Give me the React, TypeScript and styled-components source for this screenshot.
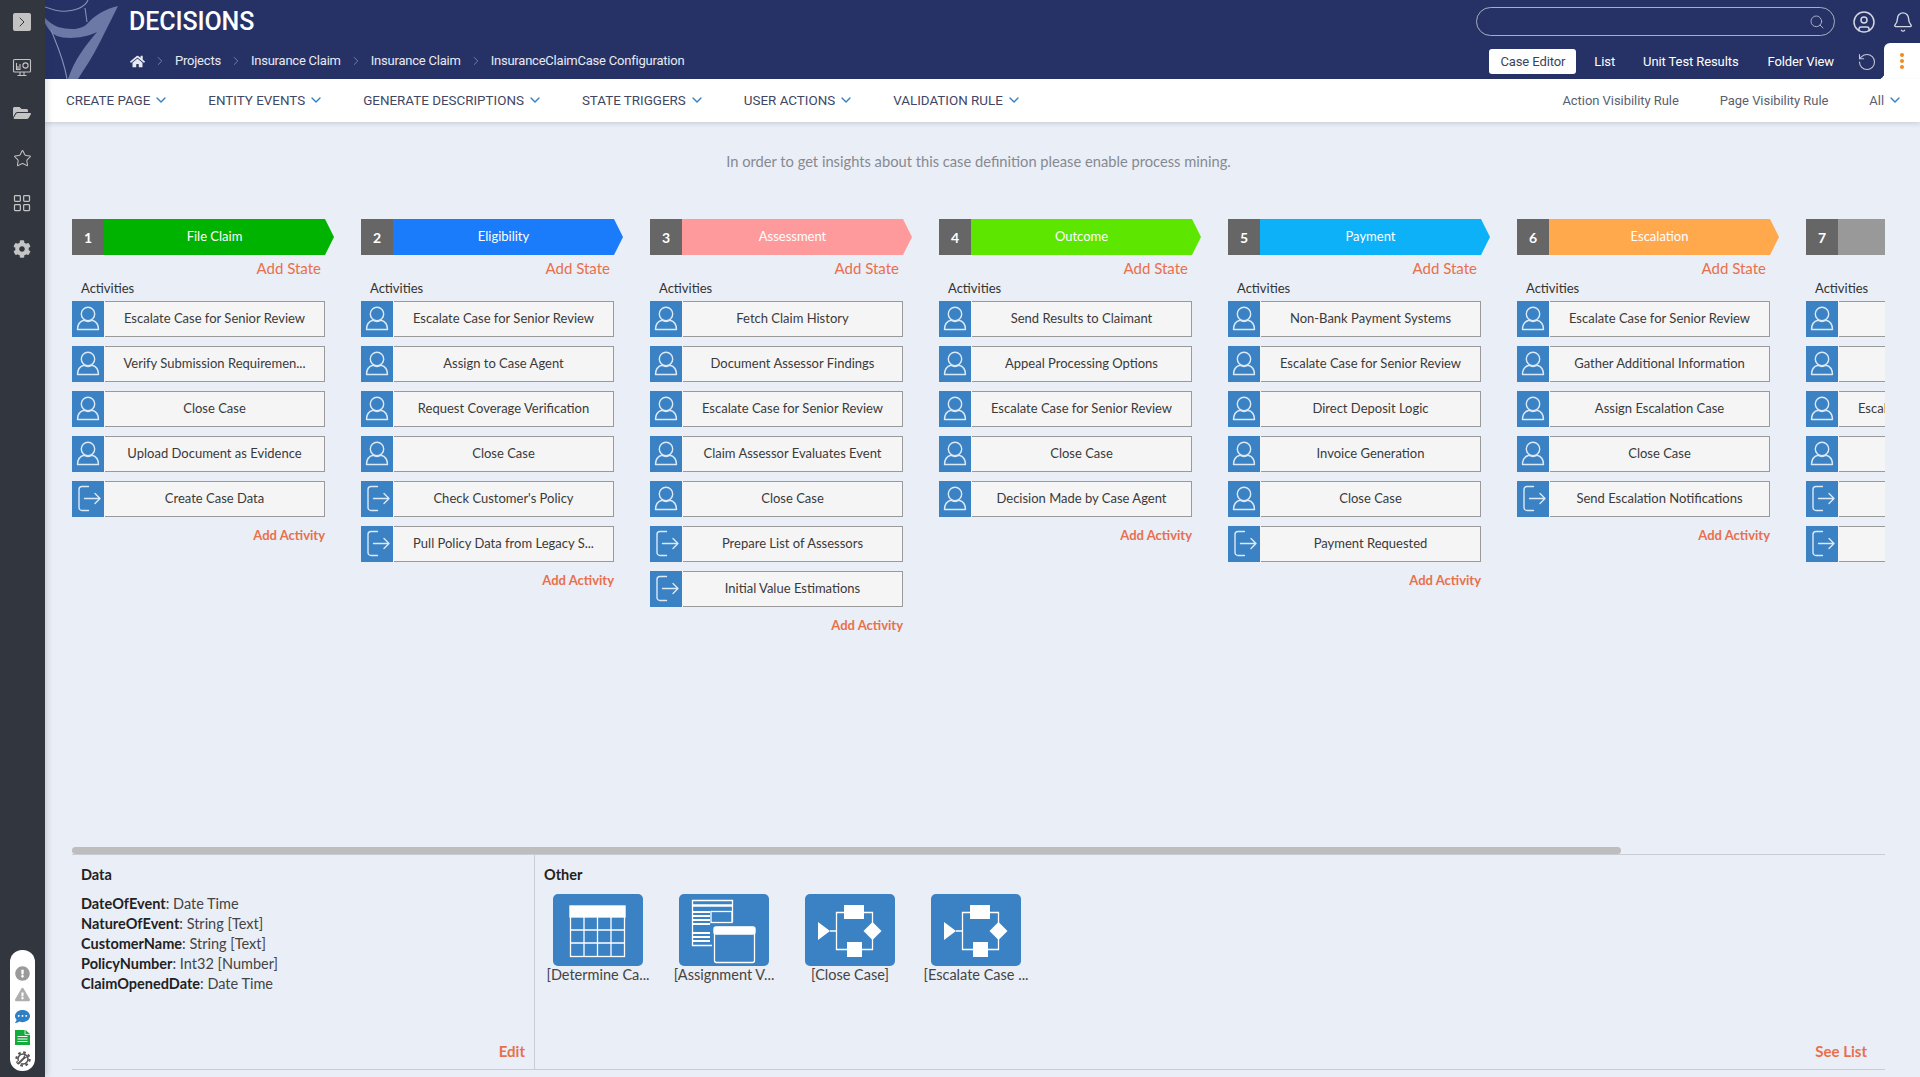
import React from "react";
import styled, { createGlobalStyle } from "styled-components";
import { Bell, ChevronDown, ChevronRight, CircleUser, LayoutGrid, RotateCcw, Search, Star } from "lucide-react";
import { FaCog, FaCommentDots, FaExclamationCircle, FaExclamationTriangle, FaFolderOpen, FaHome } from "react-icons/fa";

const Global = createGlobalStyle`
  html, body { margin: 0; padding: 0; height: 100%; overflow: hidden; background: #eaeef6; }
  * { box-sizing: border-box; }
  #root { height: 100%; }
`;

const Shell = styled.div`
  display: flex;
  width: 1920px;
  height: 1077px;
  overflow: hidden;
  font-family: "Lato", "Open Sans", sans-serif;
  color: #333;
`;

const Rail = styled.nav`
  flex: 0 0 45px;
  background: #31363f;
  display: flex;
  flex-direction: column;
  align-items: center;
  padding: 13px 1px 6px 0;
  color: #c4c4c4;
  box-shadow: 2px 0 6px rgba(40, 50, 70, 0.18);
  z-index: 3;
`;

const RailToggle = styled.button`
  width: 18px;
  height: 18px;
  border: 0;
  padding: 0;
  border-radius: 2px;
  background: #c2c2c2;
  color: #31363f;
  display: flex;
  align-items: center;
  justify-content: center;
  margin-bottom: 28px;
`;

const RailItem = styled.div`
  height: 18px;
  display: flex;
  align-items: center;
  justify-content: center;
  margin-bottom: 27px;
`;

const LastRailItem = styled(RailItem)`
  margin-top: 1px;
`;

const StatusPill = styled.div`
  margin-top: auto;
  margin-left: 1px;
  width: 25px;
  height: 121px;
  border-radius: 12px;
  background: #fff;
  display: flex;
  flex-direction: column;
  align-items: center;
  justify-content: flex-end;
  gap: 6px;
  padding-bottom: 4px;
`;

const PillIcon = styled.span<{ $c: string }>`
  display: flex;
  height: 15.5px;
  align-items: center;
  color: ${(p) => p.$c};
`;

const Main = styled.div`
  flex: 1;
  min-width: 0;
  display: flex;
  flex-direction: column;
`;

const Header = styled.header`
  position: relative;
  height: 79px;
  flex: none;
  background: #263266;
  color: #fff;
  font-family: "Roboto", sans-serif;
  display: flex;
  justify-content: space-between;
`;

const Logo = styled.svg`
  position: absolute;
  left: 0;
  top: 0;
`;

const Brand = styled.div`
  padding: 8px 0 0 84px;
  display: flex;
  flex-direction: column;
`;

const Title = styled.div`
  font-size: 25px;
  font-weight: 500;
  line-height: 28px;
  letter-spacing: -0.1px;
`;

const Crumbs = styled.div`
  display: flex;
  align-items: center;
  margin-top: 16px;
  margin-left: 1px;
  font-size: 13px;
  line-height: 18px;
  letter-spacing: -0.22px;
  color: #e8eaf2;
`;

const CrumbSep = styled(ChevronRight)`
  margin: 0 8px;
  color: #aab0c8;
`;

const HeaderRight = styled.div`
  display: flex;
  flex-direction: column;
  align-items: flex-end;
`;

const TopRow = styled.div`
  display: flex;
  align-items: center;
  height: 43px;
  padding: 0 6px 0 0;
`;

const SearchBox = styled.div`
  width: 359px;
  height: 29px;
  border: 1px solid #a9aec4;
  border-radius: 15px;
  display: flex;
  align-items: center;
  justify-content: flex-end;
  padding-right: 9px;
  color: #a9aec4;
  margin: 0 17px 0 0;
`;

const TopIcon = styled.span`
  display: flex;
  color: #d4d7e2;
  margin-left: 0;
`;

const BellIcon = styled(TopIcon)`
  margin-left: 16px;
`;

const ViewRow = styled.div`
  display: flex;
  align-items: center;
  height: 36px;
`;

const ViewTab = styled.div<{ $active?: boolean }>`
  height: 25px;
  margin: 1px 0 0 ${(p) => (p.$active ? 0 : 29)}px;
  display: flex;
  align-items: center;
  padding: ${(p) => (p.$active ? "0 11px" : "0")};
  border-radius: 3px;
  font-size: 13px;
  letter-spacing: -0.1px;
  background: ${(p) => (p.$active ? "#fff" : "transparent")};
  color: ${(p) => (p.$active ? "#3b4260" : "#fff")};
`;

const ListTab = styled(ViewTab)`
  margin-left: 18px;
  margin-right: -1px;
`;

const RefreshIcon = styled.span`
  display: flex;
  margin: 1px 0 0 23px;
  color: #c4c8d6;
`;

const KebabTab = styled.div`
  margin-left: 7px;
  width: 36px;
  height: 36px;
  background: #fff;
  border-top-left-radius: 6px;
  display: flex;
  flex-direction: column;
  align-items: center;
  justify-content: center;
  gap: 2px;
  position: relative;
  &::before {
    content: "";
    position: absolute;
    left: -6px;
    bottom: 0;
    width: 6px;
    height: 6px;
    background: radial-gradient(circle at 0 0, #263266 6px, #fff 6.5px);
  }
`;

const Dot = styled.span`
  width: 4px;
  height: 4px;
  border-radius: 50%;
  background: #f08c1e;
`;

const Toolbar = styled.div`
  height: 43px;
  flex: none;
  background: #fff;
  display: flex;
  align-items: center;
  padding: 0 0 1px 21px;
  font-family: "Roboto", sans-serif;
  font-size: 13.4px;
  color: #3f4663;
  box-shadow: 0 2px 4px rgba(40, 50, 80, 0.15);
  z-index: 2;
`;

const Menu = styled.div`
  display: flex;
  align-items: center;
  gap: 3px;
  margin-right: 39px;
`;

const Chevron = styled(ChevronDown)`
  color: #2f7fc4;
`;

const ToolbarRight = styled.div`
  margin-left: auto;
  display: flex;
  align-items: center;
  padding-right: 17px;
  font-size: 13px;
  letter-spacing: -0.05px;
  color: #5a5f70;
`;

const RuleLink = styled.div`
  margin-right: 41px;
`;

const AllMenu = styled(Menu)`
  margin-right: 0;
`;

const Body = styled.div`
  flex: 1;
  min-height: 0;
  display: flex;
  flex-direction: column;
  padding: 0 35px 7px 27px;
`;

const Insight = styled.div`
  height: 97px;
  flex: none;
  padding-top: 30px;
  text-align: center;
  font-size: 14.7px;
  line-height: 18px;
  color: #858a92;
`;

const Board = styled.div`
  flex: 1;
  min-height: 0;
  display: flex;
  gap: 27px;
  overflow: hidden;
`;

const Column = styled.section`
  flex: 0 0 262px;
  display: flex;
  flex-direction: column;
`;

const StageHead = styled.div`
  display: flex;
  height: 36px;
`;

const StageNo = styled.div`
  flex: 0 0 32px;
  background: #666;
  color: #fff;
  font-weight: 700;
  font-size: 14px;
  display: flex;
  align-items: center;
  justify-content: center;
`;

const StageName = styled.div<{ $c: string }>`
  flex: 1;
  background: ${(p) => p.$c};
  color: #fff;
  font-size: 13px;
  display: flex;
  align-items: center;
  justify-content: center;
  padding: 0 9px 2px 0;
  clip-path: polygon(0 0, calc(100% - 9px) 0, 100% 50%, calc(100% - 9px) 100%, 0 100%);
`;

const AddState = styled.div`
  height: 26px;
  width: 249px;
  text-align: right;
  font-size: 15px;
  line-height: 26px;
  color: #e8704c;
`;

const ActivitiesLabel = styled.div`
  height: 20px;
  padding-left: 9px;
  font-size: 13px;
  line-height: 14px;
  color: #333;
`;

const Rows = styled.div`
  display: flex;
  flex-direction: column;
  gap: 9px;
  width: 253px;
`;

const ActivityRow = styled.div`
  display: flex;
  height: 36px;
  border: 1px solid #9a9a9a;
  background: #f5f5f5;
`;

const IconCell = styled.div`
  flex: 0 0 33px;
  margin: -1px 0 -1px -1px;
  background: #3b82c4;
  display: flex;
  align-items: center;
  justify-content: center;
  border-right: 1px solid #f5f5f5;
`;

const ActivityText = styled.div`
  flex: 1;
  min-width: 0;
  display: flex;
  align-items: center;
  justify-content: center;
  white-space: nowrap;
  font-size: 13px;
  padding-bottom: 2px;
  color: #3a3a3a;
`;

const AddActivity = styled.div`
  width: 253px;
  text-align: right;
  font-size: 13px;
  font-weight: 700;
  line-height: 16px;
  margin-top: 10px;
  color: #e8704c;
`;

const ScrollTrack = styled.div`
  flex: none;
  height: 8px;
  border-bottom: 1px solid #c8ccd4;
`;

const ScrollThumb = styled.div`
  width: 1549px;
  height: 7px;
  border-radius: 4px;
  background: #bdbdbd;
`;

const Footer = styled.div`
  flex: none;
  height: 215px;
  display: flex;
  border-bottom: 1px solid #c8ccd4;
`;

const DataPane = styled.div`
  flex: 0 0 463px;
  border-right: 1px solid #c8ccd4;
  padding: 11px 9px 0;
  display: flex;
  flex-direction: column;
`;

const PaneTitle = styled.div`
  font-size: 14.5px;
  font-weight: 700;
  line-height: 17px;
  color: #222;
`;

const DataList = styled.div`
  margin-top: 11px;
  font-size: 14.5px;
  line-height: 20px;
  color: #444;
`;

const DataName = styled.b`
  color: #222;
  font-weight: 700;
`;

const LinkText = styled.div`
  margin-top: auto;
  text-align: right;
  font-size: 15px;
  font-weight: 700;
  line-height: 18px;
  padding-bottom: 9px;
  color: #e8704c;
`;

const OtherPane = styled.div`
  flex: 1;
  padding: 11px 18px 0 9px;
  display: flex;
  flex-direction: column;
`;

const Tiles = styled.div`
  display: flex;
  margin-top: 11px;
  margin-left: -9px;
`;

const Tile = styled.div`
  flex: 0 0 126px;
  display: flex;
  flex-direction: column;
  align-items: center;
  font-size: 14.5px;
  line-height: 18px;
  color: #444;
  white-space: nowrap;
`;

const TileArt = styled.svg`
  display: block;
  border-radius: 5px;
  background: #3b82c4;
`;

const Person = () => (
  <svg width="32" height="36" viewBox="0 0 32 36" fill="none" stroke="#dce9f6" strokeWidth="1.4">
    <circle cx="16" cy="13" r="6.7" />
    <path d="M5.500 28.500c0-5.500 3.400-8.500 6.500-9.300 2.400 1.600 5.600 1.600 8 0 3.100.8 6.500 3.800 6.500 9.300z" strokeLinejoin="round" />
  </svg>
);

const Exit = () => (
  <svg width="32" height="36" viewBox="0 0 32 36" fill="none" stroke="#dce9f6" strokeWidth="1.4" strokeLinecap="round" strokeLinejoin="round">
    <path d="M16.500 5.500H10a3 3 0 0 0-3 3v18a3 3 0 0 0 3 3h6.500" />
    <path d="M12.500 17.500H28M23 12.500l5 5-5 5" />
  </svg>
);

const TableArt = () => (
  <TileArt width="90" height="72" viewBox="0 0 90 72" fill="none" stroke="#fff" strokeWidth="1.300">
    <rect x="17.500" y="12.500" width="54" height="50" />
    <rect x="17" y="12" width="55" height="11" fill="#fff" />
    <path d="M31 23v40M44.500 23v40M58 23v40M17 36h55M17 49h55" />
  </TileArt>
);

const FormArt = () => (
  <TileArt width="90" height="72" viewBox="0 0 90 72" fill="none" stroke="#fff" strokeWidth="1.300">
    <path d="M33 51.500H13.500V6.500H53.500V28" />
    <path d="M13 11.500h41" strokeWidth="2.500" />
    <path d="M14 18h17M14 22h17M14 26h17M14 30h17M14 39h17M14 43h17M14 47h17" strokeWidth="1.800" />
    <rect x="32" y="17.500" width="21" height="11" />
    <rect x="35.500" y="33.500" width="40" height="35" rx="2" />
    <rect x="35" y="33" width="41" height="7" rx="2" fill="#fff" />
  </TileArt>
);

const FlowArt = () => (
  <TileArt width="90" height="72" viewBox="0 0 90 72" fill="none" stroke="#fff" strokeWidth="1.300">
    <path d="M13 28l12 9-12 9z" fill="#fff" stroke="none" />
    <path d="M25 37h6.500M31.500 18.500H67.500V55.500H31.500z" />
    <rect x="39" y="11" width="20" height="14" fill="#fff" stroke="none" />
    <rect x="42" y="48" width="15" height="15" fill="#fff" stroke="none" />
    <path d="M67.500 28l9 9-9 9-9-9z" fill="#fff" stroke="none" />
  </TileArt>
);

const Monitor = () => (
  <svg width="20" height="20" viewBox="0 0 20 20" fill="none" stroke="#c4c4c4" strokeWidth="1.100">
    <rect x="1.500" y="1.500" width="17" height="12.500" rx="1" />
    <path d="M4.500 5v6.500h4M6 11V8M8 11V6" />
    <circle cx="13.500" cy="7.500" r="2.600" />
    <path d="M8 14v3M12 14v3M5.500 17.500h9" />
  </svg>
);

const SheetIcon = () => (
  <svg width="15" height="15" viewBox="0 0 15 15">
    <path d="M0 0h10.500L15 4v11H0z" fill="#12ab3c" />
    <path d="M10 0v4.500h5" fill="none" stroke="#fff" strokeWidth="0.800" />
    <path d="M2.500 6.500h10M2.500 9h10M2.500 11.500h10" stroke="#fff" strokeWidth="1" />
  </svg>
);

const ToolGear = () => (
  <svg width="16" height="16" viewBox="0 0 16 16" fill="none" stroke="#555">
    <circle cx="8" cy="8" r="5" strokeWidth="1.500" />
    <circle cx="8" cy="8" r="6.600" strokeWidth="2.200" strokeDasharray="2.600 2.580" />
    <path d="M3.500 12.500L10.500 5.500" stroke="#fff" strokeWidth="3.500" />
    <path d="M3.500 12.500L9.500 6.500" strokeWidth="1.800" strokeLinecap="round" />
    <path d="M8.800 7.200a2.300 2.300 0 0 1 2.200-3.400L9.800 5.300l.9.900 1.500-1.200a2.300 2.300 0 0 1-3.400 2.200z" fill="#555" stroke="none" />
  </svg>
);

const LogoArt = () => (
  <Logo width="80" height="79" viewBox="0 0 80 79" fill="none">
    <path d="M73 6C60 9 50 15 42 24 36 30 25 30 13 27 8 25 3 21 0 18v5c3 6 7 11 12 13 8 3 26 3 40-4C42 44 30 58 23 79h10C40 68 48 56 54 44 60 32 66 20 73 6z" fill="#6c78a6" />
    <path d="M0 7c8 3 16 5 22 4C32 10 40 7 43 0M40 8l2 14M6 30c6 15 13 30 16 49" stroke="#8791b6" strokeWidth="1.100" />
  </Logo>
);

type Act = [string, "p" | "e"];
const P = (t: string): Act => [t, "p"];
const E = (t: string): Act => [t, "e"];

const stages: { name: string; color: string; rows: Act[]; add: boolean }[] = [
  { name: "File Claim", color: "#00b300", add: true, rows: [P("Escalate Case for Senior Review"), P("Verify Submission Requiremen..."), P("Close Case"), P("Upload Document as Evidence"), E("Create Case Data")] },
  { name: "Eligibility", color: "#1a7cfa", add: true, rows: [P("Escalate Case for Senior Review"), P("Assign to Case Agent"), P("Request Coverage Verification"), P("Close Case"), E("Check Customer's Policy"), E("Pull Policy Data from Legacy S...")] },
  { name: "Assessment", color: "#ff9a9c", add: true, rows: [P("Fetch Claim History"), P("Document Assessor Findings"), P("Escalate Case for Senior Review"), P("Claim Assessor Evaluates Event"), P("Close Case"), E("Prepare List of Assessors"), E("Initial Value Estimations")] },
  { name: "Outcome", color: "#5ce600", add: true, rows: [P("Send Results to Claimant"), P("Appeal Processing Options"), P("Escalate Case for Senior Review"), P("Close Case"), P("Decision Made by Case Agent")] },
  { name: "Payment", color: "#0db1f7", add: true, rows: [P("Non-Bank Payment Systems"), P("Escalate Case for Senior Review"), P("Direct Deposit Logic"), P("Invoice Generation"), P("Close Case"), E("Payment Requested")] },
  { name: "Escalation", color: "#ffa84c", add: true, rows: [P("Escalate Case for Senior Review"), P("Gather Additional Information"), P("Assign Escalation Case"), P("Close Case"), E("Send Escalation Notifications")] },
  { name: "", color: "#999", add: false, rows: [P(""), P(""), P("Escalate Case for Senior Review"), P(""), E(""), E("")] },
];

const menus = ["CREATE PAGE", "ENTITY EVENTS", "GENERATE DESCRIPTIONS", "STATE TRIGGERS", "USER ACTIONS", "VALIDATION RULE"];
const crumbs = ["Projects", "Insurance Claim", "Insurance Claim", "InsuranceClaimCase Configuration"];
const fields = [
  ["DateOfEvent", "Date Time"],
  ["NatureOfEvent", "String [Text]"],
  ["CustomerName", "String [Text]"],
  ["PolicyNumber", "Int32 [Number]"],
  ["ClaimOpenedDate", "Date Time"],
];

export default function App() {
  return (
    <Shell>
      <Global />
      <Rail>
        <RailToggle><ChevronRight size={16} strokeWidth={1.500} /></RailToggle>
        <RailItem><Monitor /></RailItem>
        <RailItem><FaFolderOpen size={18} /></RailItem>
        <RailItem><Star size={19} strokeWidth={1.300} /></RailItem>
        <RailItem><LayoutGrid size={20} strokeWidth={1.500} /></RailItem>
        <LastRailItem><FaCog size={18} /></LastRailItem>
        <StatusPill>
          <PillIcon $c="#9a9a9a"><FaExclamationCircle size={15} /></PillIcon>
          <PillIcon $c="#aeaeae"><FaExclamationTriangle size={15} /></PillIcon>
          <PillIcon $c="#2f7fc4"><FaCommentDots size={15} /></PillIcon>
          <PillIcon $c="#12a83a"><SheetIcon /></PillIcon>
          <PillIcon $c="#555"><ToolGear /></PillIcon>
        </StatusPill>
      </Rail>
      <Main>
        <Header>
          <LogoArt />
          <Brand>
            <Title>DECISIONS</Title>
            <Crumbs>
              <FaHome size={15} />
              {crumbs.map((c, i) => (
                <React.Fragment key={i}>
                  <CrumbSep size={14} strokeWidth={1} />
                  <span>{c}</span>
                </React.Fragment>
              ))}
            </Crumbs>
          </Brand>
          <HeaderRight>
            <TopRow>
              <SearchBox><Search size={16} strokeWidth={1.500} /></SearchBox>
              <TopIcon><CircleUser size={24} strokeWidth={1.500} /></TopIcon>
              <BellIcon><Bell size={22} strokeWidth={1.500} /></BellIcon>
            </TopRow>
            <ViewRow>
              <ViewTab $active>Case Editor</ViewTab>
              <ListTab>List</ListTab>
              <ViewTab>Unit Test Results</ViewTab>
              <ViewTab>Folder View</ViewTab>
              <RefreshIcon><RotateCcw size={20} strokeWidth={1.300} /></RefreshIcon>
              <KebabTab><Dot /><Dot /><Dot /></KebabTab>
            </ViewRow>
          </HeaderRight>
        </Header>
        <Toolbar>
          {menus.map((m) => (
            <Menu key={m}>{m}<Chevron size={16} strokeWidth={2} /></Menu>
          ))}
          <ToolbarRight>
            <RuleLink>Action Visibility Rule</RuleLink>
            <RuleLink>Page Visibility Rule</RuleLink>
            <AllMenu>All<Chevron size={16} strokeWidth={2} /></AllMenu>
          </ToolbarRight>
        </Toolbar>
        <Body>
          <Insight>In order to get insights about this case definition please enable process mining.</Insight>
          <Board>
            {stages.map((s, i) => (
              <Column key={i}>
                <StageHead>
                  <StageNo>{i + 1}</StageNo>
                  <StageName $c={s.color}>{s.name}</StageName>
                </StageHead>
                <AddState>{s.add ? "Add State" : ""}</AddState>
                <ActivitiesLabel>Activities</ActivitiesLabel>
                <Rows>
                  {s.rows.map(([t, k], j) => (
                    <ActivityRow key={j}>
                      <IconCell>{k === "p" ? <Person /> : <Exit />}</IconCell>
                      <ActivityText>{t}</ActivityText>
                    </ActivityRow>
                  ))}
                </Rows>
                {s.add && <AddActivity>Add Activity</AddActivity>}
              </Column>
            ))}
          </Board>
          <ScrollTrack><ScrollThumb /></ScrollTrack>
          <Footer>
            <DataPane>
              <PaneTitle>Data</PaneTitle>
              <DataList>
                {fields.map(([n, t]) => (
                  <div key={n}><DataName>{n}</DataName>: {t}</div>
                ))}
              </DataList>
              <LinkText>Edit</LinkText>
            </DataPane>
            <OtherPane>
              <PaneTitle>Other</PaneTitle>
              <Tiles>
                <Tile><TableArt />[Determine Ca...</Tile>
                <Tile><FormArt />[Assignment V...</Tile>
                <Tile><FlowArt />[Close Case]</Tile>
                <Tile><FlowArt />[Escalate Case ...</Tile>
              </Tiles>
              <LinkText>See List</LinkText>
            </OtherPane>
          </Footer>
        </Body>
      </Main>
    </Shell>
  );
}
